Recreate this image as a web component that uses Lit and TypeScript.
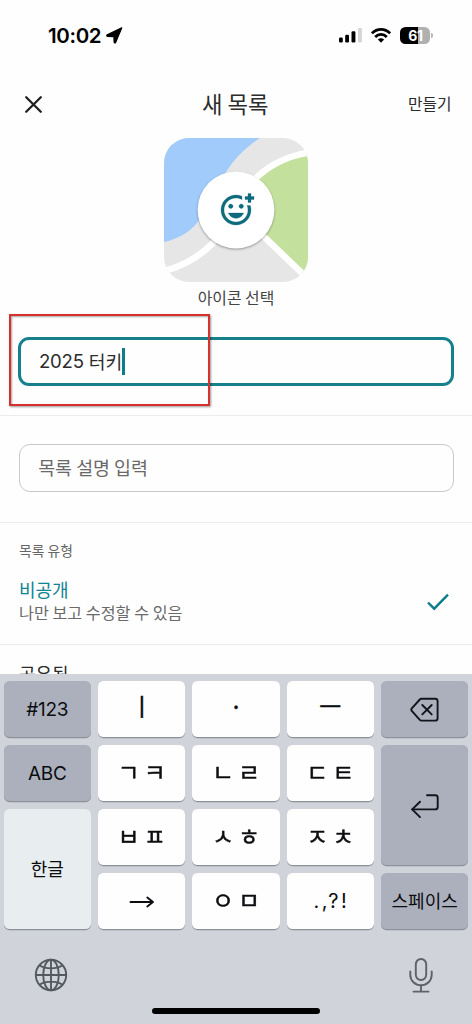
import { LitElement, html, css, svg } from "lit";
import { customElement, property } from "lit/decorators.js";
import { classMap } from "lit/directives/class-map.js";

@customElement("status-bar")
class StatusBar extends LitElement {
  static styles = css`
    :host { display: flex; box-sizing: border-box; height: 71px; padding: 0 39px 0 48px; align-items: center; justify-content: space-between; color: #000; font-family: Inter, "Noto Sans", sans-serif; }
    .left, .right { display: flex; align-items: center; }
    .time { font-size: 20.5px; font-weight: 600; line-height: 24px; letter-spacing: -0.35px; width: 58px; }
    .right { gap: 9px; }
    .battery { display: flex; align-items: center; gap: 1px; }
    .cell { width: 30px; height: 17px; border-radius: 5.5px; background: linear-gradient(90deg, #000 0 61%, #b0b0b0 61%); color: #fff; font-size: 14px; font-weight: 700; line-height: 17px; text-align: center; letter-spacing: -0.4px; }
    .nub { width: 1.6px; height: 5px; border-radius: 0 2px 2px 0; background: #b5b5b5; }
    svg { display: block; }
  `;
  render() {
    return html`
      <div class="left">
        <span class="time">10:02</span>
        <svg width="17" height="17" viewBox="0 0 17 17"><path d="M15.8.8 9.6 15.4c-.4.8-1.5.6-1.5-.3L7.9 9.6 1.5 9.4C.6 9.3.4 8.1 1.2 7.7z" fill="#000" stroke="#000" stroke-width="1.2" stroke-linejoin="round"/></svg>
      </div>
      <div class="right">
        <svg width="23" height="15" viewBox="0 0 23 15">
          <rect x="0" y="9.5" width="3.8" height="5" rx="1.2"/>
          <rect x="6.2" y="6.8" width="3.8" height="7.7" rx="1.2"/>
          <rect x="12.5" y="3.2" width="3.9" height="11.3" rx="1.2"/>
          <rect x="19" y="0" width="3.9" height="14.5" rx="1.2" fill="#d5d5d5"/>
        </svg>
        <svg width="20" height="15" viewBox="0 0 20 15">
          <g fill="none" stroke="#000" stroke-width="2.8">
            <path d="M.9 5.4C6 .1 14 .1 19.1 5.4"/>
            <path d="M4.2 8.9c3.3-3.3 8.3-3.3 11.6 0"/>
          </g>
          <path d="M6.9 11.6c1.8-1.7 4.4-1.7 6.2 0L10 14.8z"/>
        </svg>
        <div class="battery"><div class="cell">61</div><div class="nub"></div></div>
      </div>`;
  }
}

@customElement("map-tile")
class MapTile extends LitElement {
  static styles = css`
    :host { display: block; width: 144px; height: 144px; border-radius: 25px; overflow: hidden; }
    svg { display: block; }
    .disc { filter: drop-shadow(0 1px 1.2px rgba(0, 0, 0, 0.35)); }
  `;
  render() {
    return html`
      <svg width="144" height="144" viewBox="0 0 144 144">
        <rect width="144" height="144" fill="#e6e6e6"/>
        <path d="M0 0H96C82 9 71 20 62 34L33 85C26 94 14 101 0 104z" fill="#a1cbfb"/>
        <path d="M144 15C120 19 103 31 92 40L72 72 101 100 139 137 144 134z" fill="#c4e09d"/>
        <g fill="none" stroke="#fff" stroke-width="6.5">
          <path d="M146 14.5C121 18 104 28 90 42L49 105C36 118 20 128 0 133"/>
          <path d="M92 91 144 141"/>
        </g>
        <circle class="disc" cx="72" cy="72" r="38.4" fill="#fff"/>
        <path transform="translate(54 54) scale(1.5)" fill="#0d6b7c" stroke="#0d6b7c" stroke-width=".2" d="M7 9.5C7 8.67 7.67 8 8.5 8s1.5.67 1.5 1.5S9.33 11 8.5 11 7 10.33 7 9.5zM12 17.5c2.33 0 4.31-1.46 5.11-3.5H6.89c.8 2.04 2.78 3.5 5.11 3.5zM15.5 11c.83 0 1.5-.67 1.5-1.5S16.33 8 15.5 8 14 8.67 14 9.5s.67 1.5 1.5 1.5zM22 1h-2v2h-2v2h2v2h2V5h2V3h-2V1zm-2 11c0 4.42-3.58 8-8 8s-8-3.58-8-8 3.58-8 8-8c1.46 0 2.82.4 4 1.08V2.84A9.929 9.929 0 0 0 11.99 2C6.47 2 2 6.48 2 12s4.47 10 9.99 10C17.52 22 22 17.52 22 12c0-1.05-.17-2.05-.47-3h-2.13c.38.93.6 1.94.6 3z"/>
      </svg>`;
  }
}

const deleteIcon = svg`<svg width="30" height="26" viewBox="0 0 30 26" fill="none" stroke="#11141a" stroke-width="1.9" stroke-linecap="round" stroke-linejoin="round"><path d="M11.5 1.8H25.2a2.4 2.4 0 0 1 2.4 2.4V21.2a2.4 2.4 0 0 1-2.4 2.4H11.5a2.4 2.4 0 0 1-1.7-.7L2 14.2a2.2 2.2 0 0 1 0-3L9.8 2.5a2.4 2.4 0 0 1 1.7-.7z"/><path d="m12.3 8 9.4 9.4m0-9.4-9.4 9.4"/></svg>`;
const returnIcon = svg`<svg width="30" height="26" viewBox="0 0 30 26" fill="none" stroke="#11141a" stroke-width="1.9" stroke-linecap="round" stroke-linejoin="round"><path d="M17 2.2H25.3a2.4 2.4 0 0 1 2.4 2.4V14a2.4 2.4 0 0 1-2.4 2.4H2.2"/><path d="M10 8.7 2.2 16.4 10 24.1"/></svg>`;
const nextIcon = svg`<svg width="26" height="12" viewBox="0 0 26 12" fill="none" stroke="#0c0d10" stroke-width="1.9" stroke-linecap="round" stroke-linejoin="round"><path d="M1.5 6H24M18.3 1.6 24 6 18.3 10.4"/></svg>`;

interface KeyDef { area: string; tone?: string; kind: string; label?: string; icon?: unknown; }

const KEYS: KeyDef[] = [
  { area: "num", tone: "dark", kind: "latin", label: "#123" },
  { area: "i", kind: "vowel", label: "ㅣ" },
  { area: "dot", kind: "vowel", label: "·" },
  { area: "eu", kind: "vowel", label: "ㅡ" },
  { area: "del", tone: "dark", kind: "icon", icon: deleteIcon },
  { area: "abc", tone: "dark", kind: "latin", label: "ABC" },
  { area: "g", kind: "jamo", label: "ㄱㅋ" },
  { area: "n", kind: "jamo", label: "ㄴㄹ" },
  { area: "d", kind: "jamo", label: "ㄷㅌ" },
  { area: "ret", tone: "dark", kind: "icon", icon: returnIcon },
  { area: "han", tone: "pale", kind: "word", label: "한글" },
  { area: "b", kind: "jamo", label: "ㅂㅍ" },
  { area: "s", kind: "jamo", label: "ㅅㅎ" },
  { area: "j", kind: "jamo", label: "ㅈㅊ" },
  { area: "arr", kind: "icon", icon: nextIcon },
  { area: "o", kind: "jamo", label: "ㅇㅁ" },
  { area: "punct", kind: "marks", label: ".,?!" },
  { area: "space", tone: "dark", kind: "word", label: "스페이스" },
];

@customElement("hangul-keyboard")
class HangulKeyboard extends LitElement {
  static styles = css`
    :host { display: flex; flex-direction: column; box-sizing: border-box; height: 350px; padding: 7.3px 3.7px 0; background: #d0d3da; color: #0c0d10; font-family: Inter, "Noto Sans CJK KR", sans-serif; }
    .keys { display: grid; height: 248px; grid-template-columns: repeat(5, 1fr); grid-template-rows: repeat(4, 1fr); gap: 8px 7.1px;
      grid-template-areas: "num i dot eu del" "abc g n d ret" "han b s j ret" "han arr o punct space"; }
    .key { display: flex; box-sizing: border-box; min-height: 0; min-width: 0; align-items: center; justify-content: center; border-radius: 5.5px; background: #fefefe; box-shadow: 0 1.2px 0 #8d9098; white-space: nowrap; }
    .key.dark { background: #abb0bc; }
    .key.pale { background: #e8edf0; }
    .latin { font-size: 19px; letter-spacing: -0.3px; }
    .icon { padding-top: 1.5px; }
    .vowel { font-family: "Noto Sans CJK KR", sans-serif; font-size: 24.5px; line-height: 30px; padding-bottom: 6px; -webkit-text-stroke: 0.3px #0c0d10; }
    .jamo { font-family: "Noto Sans CJK KR", sans-serif; font-size: 23.5px; line-height: 28px; gap: 4.5px; padding-bottom: 5px; -webkit-text-stroke: 0.5px #0c0d10; }
    .jamo span { transform: scaleY(0.95); }
    .word { font-family: "Noto Sans CJK KR", sans-serif; font-size: 18px; line-height: 24px; padding-bottom: 3px; }
    .marks { font-size: 20px; letter-spacing: 2.5px; padding-left: 2px; }
    .num { grid-area: num; } .i { grid-area: i; } .dot { grid-area: dot; } .eu { grid-area: eu; } .del { grid-area: del; }
    .abc { grid-area: abc; } .g { grid-area: g; } .n { grid-area: n; } .d { grid-area: d; } .ret { grid-area: ret; }
    .han { grid-area: han; } .b { grid-area: b; } .s { grid-area: s; } .j { grid-area: j; }
    .arr { grid-area: arr; } .o { grid-area: o; } .punct { grid-area: punct; } .space { grid-area: space; }
    svg { display: block; }
    .tools { display: flex; justify-content: space-between; align-items: center; height: 36px; margin-top: 28px; padding: 0 35.5px 0 30.3px; }
    .home { width: 168px; height: 6.5px; border-radius: 4px; background: #000; margin: 14.5px auto 0; }
  `;
  render() {
    return html`
      <div class="keys">
        ${KEYS.map((k) => html`
          <div class=${classMap({ key: true, [k.area]: true, [k.kind]: true, [k.tone ?? "light"]: true })}>
            ${k.icon ?? (k.kind === "jamo" ? [...k.label!].map((c) => html`<span>${c}</span>`) : k.label)}
          </div>`)}
      </div>
      <div class="tools">
        <svg width="34" height="34" viewBox="0 0 34 34" fill="none" stroke="#555960" stroke-width="1.9">
          <circle cx="17" cy="17" r="15.2"/><ellipse cx="17" cy="17" rx="7.8" ry="15.2"/>
          <path d="M17 1.8V32.2M1.8 17H32.2M5.4 7.2C11.8 11.4 22.2 11.4 28.6 7.2M5.4 26.8c6.4-4.2 16.8-4.2 23.2 0"/>
        </svg>
        <svg width="24" height="35" viewBox="0 0 24 35" fill="none" stroke="#5e6268" stroke-width="1.9" stroke-linecap="round">
          <rect x="6.8" y="1" width="10.4" height="21" rx="5.2"/>
          <path d="M1.3 13.5V17a10.7 10.2 0 0 0 21.4 0V13.5M12 27.2V33.6M4.5 33.6H19.5"/>
        </svg>
      </div>
      <div class="home"></div>`;
  }
}

@customElement("app-root")
class AppRoot extends LitElement {
  @property() year = "2025";
  @property() place = "터키";
  static styles = css`
    :host { display: flex; flex-direction: column; position: relative; width: 472px; height: 1024px; overflow: hidden; background: #fefefe; color: #2c2c2c; font-family: "Noto Sans CJK KR", sans-serif; }
    svg { display: block; }
    header { display: grid; grid-template-columns: 100px 1fr 100px; align-items: center; height: 67px; box-sizing: border-box; padding: 0 20.5px 0 24px; }
    .title { text-align: center; font-size: 22.3px; line-height: 32px; padding: 0 5px 4px 0; }
    .create { text-align: right; font-size: 15.8px; line-height: 24px; padding-bottom: 1px; }
    .picker { display: flex; flex-direction: column; align-items: center; height: 198.5px; }
    .caption { font-size: 15.9px; line-height: 24px; margin-top: 4px; color: #444; }
    .field { display: flex; align-items: center; box-sizing: border-box; font-size: 18.2px; line-height: 26px; }
    .active { height: 49px; margin: 0 18px 29.5px; padding-left: 18px; border: 3px solid #16808d; border-radius: 11px; }
    .year { font-family: Inter, sans-serif; font-size: 18.6px; letter-spacing: -0.25px; margin-right: 5px; }
    .caret { width: 2.6px; height: 27px; background: #0e7c8a; }
    .rule { height: 1px; background: #ececec; }
    .plain { height: 48px; margin: 28px 18.5px 30px; padding: 0 0 1.5px 18.7px; border: 1.3px solid #c9c9c9; border-radius: 11px; color: #696969; font-size: 18.4px; }
    .type { font-size: 13.8px; line-height: 20px; margin: 16.5px 19px 17.5px; color: #666; }
    .option { display: flex; justify-content: space-between; align-items: center; padding: 0 22px 0 19px; height: 46px; margin-bottom: 20.5px; }
    .name { font-size: 18px; line-height: 24px; color: #0e8593; }
    .hint { font-size: 16.2px; line-height: 22px; color: #6a6a6a; }
    .tick { margin-top: 4px; }
    .shared { font-size: 18px; line-height: 24px; margin: 16px 19px 0; }
    .scroll { height: 603px; overflow: hidden; flex: none; }
    .mark { position: absolute; left: 9px; top: 314px; width: 201px; height: 92px; box-sizing: border-box; border: 2px solid #d6302f; box-shadow: 1px 1px 2px rgba(0, 0, 0, 0.4), inset 1px 1px 2px rgba(0, 0, 0, 0.35); }
    status-bar, hangul-keyboard { flex: none; }
  `;
  render() {
    return html`
      <status-bar></status-bar>
      <div class="scroll">
        <header>
          <svg width="19" height="19" viewBox="0 0 19 19" fill="none" stroke="#222" stroke-width="2.3" stroke-linecap="round"><path d="M2.2 2.2 16.8 16.8M16.8 2.2 2.2 16.8"/></svg>
          <div class="title">새 목록</div>
          <div class="create">만들기</div>
        </header>
        <div class="picker"><map-tile></map-tile><div class="caption">아이콘 선택</div></div>
        <div class="field active"><span class="year">${this.year}</span><span>${this.place}</span><span class="caret"></span></div>
        <div class="rule"></div>
        <div class="field plain">목록 설명 입력</div>
        <div class="rule"></div>
        <div class="type">목록 유형</div>
        <div class="option">
          <div><div class="name">비공개</div><div class="hint">나만 보고 수정할 수 있음</div></div>
          <svg class="tick" width="24" height="20" viewBox="0 0 24 20" fill="none" stroke="#0e7c8a" stroke-width="2.4"><path d="M2 10.5 8.2 16.7 22 2.6"/></svg>
        </div>
        <div class="rule"></div>
        <div class="shared">공유됨</div>
      </div>
      <hangul-keyboard></hangul-keyboard>
      <div class="mark"></div>`;
  }
}
